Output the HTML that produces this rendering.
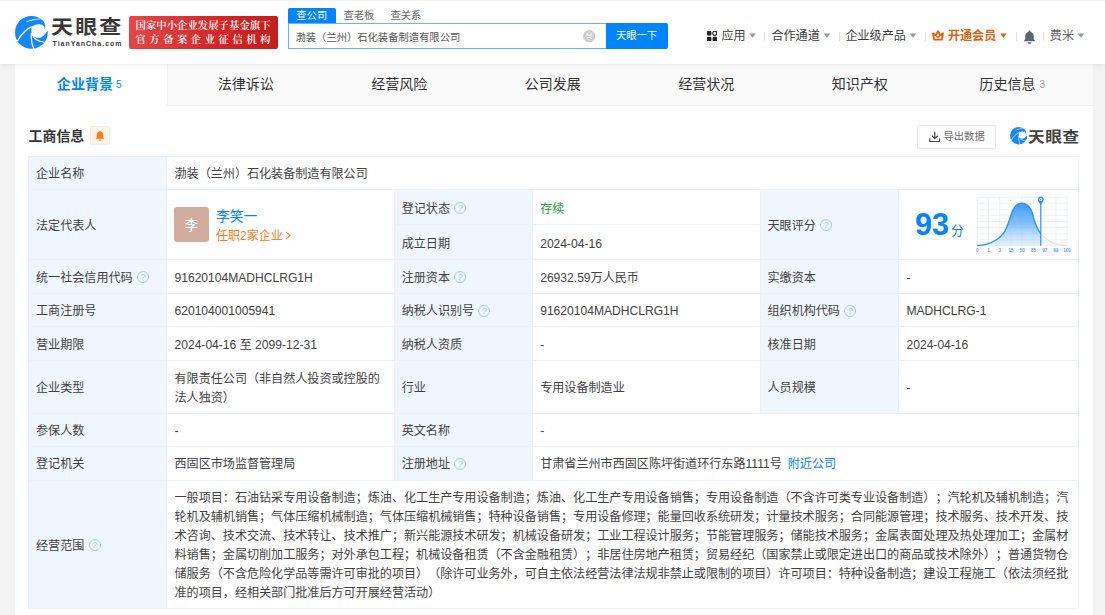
<!DOCTYPE html>
<html lang="zh-CN">
<head>
<meta charset="utf-8">
<title>天眼查</title>
<style>
*{box-sizing:border-box;margin:0;padding:0}
html,body{width:1105px;height:615px;overflow:hidden}
body{position:relative;text-spacing-trim:space-all;background:#f3f3f3;font-family:"Liberation Sans","Noto Sans CJK SC",sans-serif;font-size:12px;color:#333}
.abs{position:absolute;white-space:nowrap}
#header{position:absolute;left:0;top:0;width:1105px;height:64px;background:#fff;border-top:1px solid #f1f1f1;box-shadow:0 1px 5px rgba(0,0,0,.09);z-index:5}
#card{position:absolute;left:15px;top:64px;width:1077.6px;height:551px;background:#fff}
#nav{position:absolute;left:0;top:0;width:1077.6px;height:41.5px;background:#fafafa;border-bottom:1px solid #f2f2f2}
.tab{position:absolute;top:0;height:41.5px;width:153.5px;text-align:center;line-height:41.5px;font-size:14.05px;color:#333;white-space:nowrap}
.tab.act{background:#fff;color:#0084ff;font-weight:bold;width:152.5px;border-right:1px solid #f3f3f3}
.tab small{font-size:10px;font-weight:normal;margin-left:3px;position:relative;top:-1px}
.tab.gray small{color:#999;margin-left:4px}
.hn{position:absolute;top:.4px;margin-left:.4px;height:64px;line-height:70px;font-size:12.1px;color:#3d3d3d;white-space:nowrap}
.sep{position:absolute;top:30.5px;width:1px;height:9.5px;background:#e2e2e2}
.caret{position:absolute;top:32.4px;width:6.6px;height:4.4px;margin-left:-.3px;background:#999;clip-path:polygon(0 0,100% 0,50% 100%)}
/* table */
#tbl{position:absolute;left:27.5px;top:155.5px;width:1051.5px;border-top:1px solid #ebf2f9;border-left:1px solid #ebf2f9}
.c{border-right:1px solid #ebf2f9;border-bottom:1px solid #ebf2f9;padding-left:7.5px;padding-top:4px;font-size:12.085px;line-height:18.95px;color:#424242;display:flex;align-items:center;white-space:nowrap}
.row{display:flex}
.c{position:relative;flex:none}
.l{background:#eff6fd}
.up1 .c{padding-top:2.2px}
.up05 .c{padding-top:3px}
.c.l:nth-child(n+3),.row .row .c.l{padding-left:6.5px}
.q{display:inline-block;position:relative;top:-1.2px;width:12px;height:12px;border:1px solid #a9cdf3;border-radius:50%;margin-left:4.3px;color:#a9cdf3;font-size:9px;line-height:10.5px;text-align:center;font-family:"Liberation Sans",sans-serif}
</style>
</head>
<body>
<div id="header">
  <!-- logo -->
  <svg class="abs" style="left:15px;top:14.5px" width="33" height="33" viewBox="0 0 33 33">
    <circle cx="16.4" cy="16.4" r="16.4" fill="#1687fb"/>
    <path d="M17.2 10.6 C19.5 8.8 22 8.2 24.2 8.3 C26.5 8.5 28.2 9.2 29 10.3 C29.6 11.3 29.8 12.3 29.7 13.4 L32.6 15.1 C31.5 16.2 30.8 17.1 30.1 18 C29.4 19 28.7 19.7 27.9 20.3 C26.9 21.1 25.9 21.6 24.9 21.8 C23.5 22.1 22.1 22 20.9 21.5 C20.1 21.2 19.5 20.8 18.9 20.4 C17.6 19.3 16.9 18.2 16.7 17 C16.2 14.8 16.4 12.4 17.2 10.6 Z" fill="#fff"/>
    <path d="M29.7 13.4 C30.7 11.4 30.5 8.8 29.2 6.2 L34 5.6 L34 15.4 L32.6 15.1 Z" fill="#fff"/>
    <path d="M11 6 C15 3.8 20 2.8 25.2 3 C20 3.5 15.5 4.5 11 6Z" fill="#fff" stroke="#fff" stroke-width=".3"/>
    <path d="M17.6 10.3 C12 12.5 6 18 2.6 25" stroke="#fff" stroke-width="1.3" fill="none"/>
    <path d="M16.5 16.8 C15.9 21 16.3 27 18.8 33" stroke="#fff" stroke-width="1.2" fill="none"/>
    <path d="M16.8 17.2 C17.5 20 19 22.3 21.5 23.8 C23.5 25 26 25.8 29.5 26.3" stroke="#fff" stroke-width="1.1" fill="none"/>
  </svg>
  <div class="abs" style="left:51px;top:8.2px;font-size:19.8px;font-weight:bold;letter-spacing:2px;color:#3a3736;line-height:34px;transform:scaleX(1.11);transform-origin:0 0;font-family:'Noto Sans CJK SC','Liberation Sans',sans-serif">天眼查</div>
  <div class="abs" style="left:52.5px;top:37.6px;font-size:7px;font-weight:bold;letter-spacing:.98px;color:#3a3736;line-height:10px;font-family:'Liberation Sans',sans-serif">TianYanCha.com</div>
  <!-- red badge -->
  <div class="abs" style="left:129px;top:15px;width:149px;height:33px;border-radius:2px;background:linear-gradient(100deg,#e54848 0%,#d42626 60%,#c41c1c 100%)"></div>
  <div class="abs" style="left:135.5px;top:16.5px;font-family:'Noto Serif CJK SC','Liberation Serif',serif;font-weight:600;font-size:10.4px;color:#fff;line-height:13px;letter-spacing:0">国家中小企业发展子基金旗下</div>
  <div class="abs" style="left:135.5px;top:31.3px;font-family:'Noto Serif CJK SC','Liberation Serif',serif;font-weight:600;font-size:10.4px;color:#fff;line-height:13px;letter-spacing:3.45px">官方备案企业征信机构</div>
  <!-- search -->
  <div class="abs" style="left:288px;top:6.5px;width:47.5px;height:15.5px;background:#0084ff;border-radius:2px 2px 0 0;color:#fff;font-size:10.3px;line-height:15.5px;text-align:center">查公司</div>
  <div class="abs" style="left:343.5px;top:6.5px;color:#666;font-size:10.3px;line-height:15.5px">查老板</div>
  <div class="abs" style="left:390.5px;top:6.5px;color:#666;font-size:10.3px;line-height:15.5px">查关系</div>
  <div class="abs" style="left:288px;top:22px;width:318px;height:25.75px;border:1px solid #66b0ff;border-right:none;background:#fff;border-radius:1px 0 0 1px"></div>
  <div class="abs" style="left:295.5px;top:23.5px;height:26px;line-height:26px;font-size:10.3px;color:#555">渤装（兰州）石化装备制造有限公司</div>
  <svg class="abs" style="left:583px;top:28.5px" width="12.4" height="12.4" viewBox="0 0 12 12"><circle cx="6" cy="6" r="6" fill="#cfcfcf"/><path d="M3.9 3.9 L8.1 8.1 M8.1 3.9 L3.9 8.1" stroke="#fff" stroke-width="1.2" stroke-linecap="round"/></svg>
  <div class="abs" style="left:605.5px;top:22px;width:62px;height:25.75px;background:#0084ff;border-radius:0 2px 2px 0;color:#fff;font-size:10.3px;line-height:26.5px;text-align:center">天眼一下</div>
  <!-- right nav -->
  <svg class="abs" style="left:707px;top:29.5px" width="10" height="10.4" viewBox="0 0 10.5 10.5" preserveAspectRatio="none"><rect x="0" y="0" width="4.6" height="4.6" rx=".8" fill="#222"/><circle cx="8.1" cy="2.3" r="2.1" fill="none" stroke="#222" stroke-width="1.1"/><rect x="0" y="5.9" width="4.6" height="4.6" rx=".8" fill="#222"/><rect x="5.9" y="5.9" width="4.6" height="4.6" rx=".8" fill="#222"/></svg>
  <div class="hn" style="left:721px">应用</div><i class="caret" style="left:749.5px"></i>
  <i class="sep" style="left:764px"></i>
  <div class="hn" style="left:771px">合作通道</div><i class="caret" style="left:824px"></i>
  <i class="sep" style="left:839px"></i>
  <div class="hn" style="left:845px">企业级产品</div><i class="caret" style="left:910px"></i>
  <i class="sep" style="left:925px"></i>
  <svg class="abs" style="left:932.3px;top:29.3px" width="12" height="10.6" viewBox="0 0 12 10.6"><path d="M1 3.4 L3.7 5.3 L6 1.2 L8.3 5.3 L11 3.4 L9.9 9.6 L2.1 9.6 Z" fill="none" stroke="#e0620d" stroke-width="1.9" stroke-linejoin="round"/><path d="M4.3 6 L6 7.6 L7.7 6" fill="none" stroke="#e0620d" stroke-width="1.3"/></svg>
  <div class="hn" style="left:947.5px;color:#e0620d;font-weight:bold">开通会员</div><i class="caret" style="left:1000.5px;background:#e0620d"></i>
  <i class="sep" style="left:1015.5px"></i>
  <svg class="abs" style="left:1022.5px;top:29px" width="13" height="14.5" viewBox="0 0 13 14.5"><path d="M6.5 0.6 C7.2 0.6 7.5 1.1 7.5 1.7 C9.7 2.3 10.8 4.2 10.8 6.4 L10.8 9.2 L12.4 11.2 L0.6 11.2 L2.2 9.2 L2.2 6.4 C2.2 4.2 3.3 2.3 5.5 1.7 C5.5 1.1 5.8 0.6 6.5 0.6 Z" fill="#5b6570"/><path d="M4.7 12.3 L8.3 12.3 C8.3 13.3 7.4 13.9 6.5 13.9 C5.6 13.9 4.7 13.3 4.7 12.3Z" fill="#5b6570"/></svg>
  <i class="sep" style="left:1043px"></i>
  <div class="hn" style="left:1049.4px;color:#666">费米</div><i class="caret" style="left:1078px"></i>
</div>

<div id="card">
  <div id="nav">
    <div class="tab act" style="left:0"><span style="position:relative;left:-1.5px">企业背景<small>5</small></span></div>
    <div class="tab" style="left:154px">法律诉讼</div>
    <div class="tab" style="left:307.5px">经营风险</div>
    <div class="tab" style="left:461px">公司发展</div>
    <div class="tab" style="left:614.5px">经营状况</div>
    <div class="tab" style="left:768px">知识产权</div>
    <div class="tab gray" style="left:921.5px"><span style="position:relative;left:-1px">历史信息<small>3</small></span></div>
  </div>
</div>

<!-- section head -->
<div class="abs" style="left:28.6px;top:126.7px;font-size:13.9px;font-weight:bold;color:#333;line-height:19px">工商信息</div>
<div class="abs" style="left:90.3px;top:126px;width:19.7px;height:18.8px;background:#fff4ea;border:1px solid #ffeadb;border-radius:2px"></div>
<svg class="abs" style="left:95px;top:129.8px" width="10" height="11.5" viewBox="0 0 13 14.5"><path d="M6.5 0.6 C7.2 0.6 7.5 1.1 7.5 1.7 C9.7 2.3 10.8 4.2 10.8 6.4 L10.8 9.2 L12.4 11.2 L0.6 11.2 L2.2 9.2 L2.2 6.4 C2.2 4.2 3.3 2.3 5.5 1.7 C5.5 1.1 5.8 0.6 6.5 0.6 Z" fill="#ff7d18"/><path d="M4.9 12.2 L8.1 12.2 C8.1 13.4 7.4 14 6.5 14 C5.6 14 4.9 13.4 4.9 12.2Z" fill="#ff7d18"/></svg>
<!-- export button -->
<div class="abs" style="left:917px;top:125px;width:78.5px;height:23.5px;border:1px solid #e6e6e6;border-radius:2px;background:#fff"></div>
<svg class="abs" style="left:928.5px;top:130.5px" width="11.5" height="11.5" viewBox="0 0 11.5 11.5"><path d="M5.75 0.8 L5.75 7.4 M2.9 4.8 L5.75 7.6 L8.6 4.8 M0.8 7.2 L0.8 10.6 L10.7 10.6 L10.7 7.2" fill="none" stroke="#444" stroke-width="1.2" stroke-linejoin="round"/></svg>
<div class="abs" style="left:943.5px;top:125px;line-height:24px;font-size:10.3px;color:#707070">导出数据</div>
<!-- small logo -->
<svg class="abs" style="left:1009.5px;top:127px" width="17.5" height="17.5" viewBox="0 0 33 33">
    <circle cx="16.4" cy="16.4" r="16.4" fill="#1687fb"/>
    <path d="M17.2 10.6 C19.5 8.8 22 8.2 24.2 8.3 C26.5 8.5 28.2 9.2 29 10.3 C29.6 11.3 29.8 12.3 29.7 13.4 L32.6 15.1 C31.5 16.2 30.8 17.1 30.1 18 C29.4 19 28.7 19.7 27.9 20.3 C26.9 21.1 25.9 21.6 24.9 21.8 C23.5 22.1 22.1 22 20.9 21.5 C20.1 21.2 19.5 20.8 18.9 20.4 C17.6 19.3 16.9 18.2 16.7 17 C16.2 14.8 16.4 12.4 17.2 10.6 Z" fill="#fff"/>
    <path d="M29.7 13.4 C30.7 11.4 30.5 8.8 29.2 6.2 L34 5.6 L34 15.4 L32.6 15.1 Z" fill="#fff"/>
    <path d="M11 6 C15 3.8 20 2.8 25.2 3 C20 3.5 15.5 4.5 11 6Z" fill="#fff" stroke="#fff" stroke-width=".3"/>
    <path d="M17.6 10.3 C12 12.5 6 18 2.6 25" stroke="#fff" stroke-width="1.3" fill="none"/>
    <path d="M16.5 16.8 C15.9 21 16.3 27 18.8 33" stroke="#fff" stroke-width="1.2" fill="none"/>
    <path d="M16.8 17.2 C17.5 20 19 22.3 21.5 23.8 C23.5 25 26 25.8 29.5 26.3" stroke="#fff" stroke-width="1.1" fill="none"/>
  </svg>
<div class="abs" style="left:1028.3px;top:123.9px;font-size:14.4px;font-weight:bold;letter-spacing:.5px;color:#414141;line-height:23px;transform:scaleX(1.155);transform-origin:0 0;font-family:'Noto Sans CJK SC','Liberation Sans',sans-serif">天眼查</div>

<div id="tbl">
<div class="row" style="height:33.5px"><div class="c l" style="width:138.5px;">企业名称</div><div class="c " style="width:912px;">渤装（兰州）石化装备制造有限公司</div></div>
<div class="row" style="height:70px;position:relative">
<div class="c l" style="width:138.5px">法定代表人</div>
<div class="c" style="width:228.2px;position:relative">
  <div class="abs" style="left:7px;top:17px;width:34.5px;height:35px;border-radius:3px;background:#d1ad9e;color:#fff;font-size:13.5px;text-align:center;line-height:37px">李</div>
  <div class="abs" style="left:49px;top:16.5px;font-size:13.75px;color:#0084ff;line-height:19px">李笑一</div>
  <div class="abs" style="left:49px;top:37.6px;font-size:12.03px;color:#ff7d18;line-height:17px">任职2家企业<svg width="6" height="9" viewBox="0 0 6 9" style="margin-left:2.3px;vertical-align:-.2px"><path d="M1 .8 L5 4.5 L1 8.2" fill="none" stroke="#ff8a30" stroke-width="1.1"/></svg></div>
</div>
<div style="flex:none;width:365.8px">
  <div class="row" style="height:35px"><div class="c l" style="width:137.5px">登记状态<i class="q">?</i></div><div class="c" style="width:228.3px;color:#1e9e3e">存续</div></div>
  <div class="row" style="height:35px"><div class="c l" style="width:137.5px">成立日期</div><div class="c" style="width:228.3px">2024-04-16</div></div>
</div>
<div class="c l" style="width:138px">天眼评分<i class="q">?</i></div>
<div class="c" style="width:180px;position:relative" id="score"><div class="abs" style="left:16px;top:16.5px;font-family:'Liberation Sans',sans-serif;font-weight:bold;font-size:30.6px;line-height:34px;color:#0084ff">93</div>
<div class="abs" style="left:52px;top:31.8px;font-size:12.8px;line-height:17px;color:#0084ff">分</div>
<svg class="abs" style="left:76px;top:5.0px" width="97" height="62" viewBox="0 0 97 62">
<defs><linearGradient id="bg" x1="0" y1="0" x2="0" y2="1"><stop offset="0" stop-color="#3b9aff" stop-opacity="1"/><stop offset=".5" stop-color="#62adff" stop-opacity=".75"/><stop offset="1" stop-color="#a8d3ff" stop-opacity=".3"/></linearGradient><clipPath id="cl"><rect x="0" y="0" width="65.8" height="62"/></clipPath><clipPath id="cr"><rect x="65.8" y="0" width="40" height="62"/></clipPath></defs>
<g stroke="#e4eefa" stroke-width=".7" fill="none"><path d="M2.20 2.2V50.8"/><path d="M13.44 2.2V50.8"/><path d="M24.68 2.2V50.8"/><path d="M35.92 2.2V50.8"/><path d="M47.16 2.2V50.8"/><path d="M58.40 2.2V50.8"/><path d="M69.64 2.2V50.8"/><path d="M80.88 2.2V50.8"/><path d="M92.12 2.2V50.8"/><path d="M2.2 2.19H92.1"/><path d="M2.2 8.27H92.1"/><path d="M2.2 14.34H92.1"/><path d="M2.2 20.42H92.1"/><path d="M2.2 26.49H92.1"/><path d="M2.2 32.57H92.1"/><path d="M2.2 38.65H92.1"/><path d="M2.2 44.72H92.1"/><path d="M2.2 50.80H92.1"/></g>
<path d="M2.20 50.60 C3.77 50.36 8.38 50.15 11.60 49.17 C14.82 48.20 18.73 46.50 21.50 44.75 C24.27 43.00 26.53 40.70 28.20 38.67 C29.87 36.65 30.55 34.63 31.50 32.60 C32.45 30.57 33.17 28.53 33.90 26.50 C34.63 24.47 35.17 22.45 35.90 20.43 C36.63 18.41 37.23 16.17 38.30 14.35 C39.37 12.53 40.85 10.55 42.30 9.50 C43.75 8.45 45.43 8.05 47.00 8.05 C48.57 8.05 50.23 8.45 51.70 9.50 C53.17 10.55 54.77 12.53 55.80 14.35 C56.83 16.17 57.23 18.41 57.90 20.43 C58.57 22.45 59.08 24.47 59.80 26.50 C60.52 28.53 61.20 30.57 62.20 32.60 C63.20 34.63 64.10 36.65 65.80 38.67 C67.50 40.70 69.83 43.00 72.40 44.75 C74.97 46.50 77.88 48.20 81.20 49.17 C84.52 50.15 90.45 50.36 92.30 50.60 L92.3 50.8 L2.2 50.8 Z" fill="url(#bg)" clip-path="url(#cl)"/>
<path d="M2.20 50.60 C3.77 50.36 8.38 50.15 11.60 49.17 C14.82 48.20 18.73 46.50 21.50 44.75 C24.27 43.00 26.53 40.70 28.20 38.67 C29.87 36.65 30.55 34.63 31.50 32.60 C32.45 30.57 33.17 28.53 33.90 26.50 C34.63 24.47 35.17 22.45 35.90 20.43 C36.63 18.41 37.23 16.17 38.30 14.35 C39.37 12.53 40.85 10.55 42.30 9.50 C43.75 8.45 45.43 8.05 47.00 8.05 C48.57 8.05 50.23 8.45 51.70 9.50 C53.17 10.55 54.77 12.53 55.80 14.35 C56.83 16.17 57.23 18.41 57.90 20.43 C58.57 22.45 59.08 24.47 59.80 26.50 C60.52 28.53 61.20 30.57 62.20 32.60 C63.20 34.63 64.10 36.65 65.80 38.67 C67.50 40.70 69.83 43.00 72.40 44.75 C74.97 46.50 77.88 48.20 81.20 49.17 C84.52 50.15 90.45 50.36 92.30 50.60 L92.3 50.8 L2.2 50.8 Z" fill="#eef1f4" fill-opacity=".6" clip-path="url(#cr)"/>
<path d="M2.20 50.60 C3.77 50.36 8.38 50.15 11.60 49.17 C14.82 48.20 18.73 46.50 21.50 44.75 C24.27 43.00 26.53 40.70 28.20 38.67 C29.87 36.65 30.55 34.63 31.50 32.60 C32.45 30.57 33.17 28.53 33.90 26.50 C34.63 24.47 35.17 22.45 35.90 20.43 C36.63 18.41 37.23 16.17 38.30 14.35 C39.37 12.53 40.85 10.55 42.30 9.50 C43.75 8.45 45.43 8.05 47.00 8.05 C48.57 8.05 50.23 8.45 51.70 9.50 C53.17 10.55 54.77 12.53 55.80 14.35 C56.83 16.17 57.23 18.41 57.90 20.43 C58.57 22.45 59.08 24.47 59.80 26.50 C60.52 28.53 61.20 30.57 62.20 32.60 C63.20 34.63 64.10 36.65 65.80 38.67 C67.50 40.70 69.83 43.00 72.40 44.75 C74.97 46.50 77.88 48.20 81.20 49.17 C84.52 50.15 90.45 50.36 92.30 50.60" fill="none" stroke="#2a8ffb" stroke-width="1.3" clip-path="url(#cl)"/>
<path d="M2.20 50.60 C3.77 50.36 8.38 50.15 11.60 49.17 C14.82 48.20 18.73 46.50 21.50 44.75 C24.27 43.00 26.53 40.70 28.20 38.67 C29.87 36.65 30.55 34.63 31.50 32.60 C32.45 30.57 33.17 28.53 33.90 26.50 C34.63 24.47 35.17 22.45 35.90 20.43 C36.63 18.41 37.23 16.17 38.30 14.35 C39.37 12.53 40.85 10.55 42.30 9.50 C43.75 8.45 45.43 8.05 47.00 8.05 C48.57 8.05 50.23 8.45 51.70 9.50 C53.17 10.55 54.77 12.53 55.80 14.35 C56.83 16.17 57.23 18.41 57.90 20.43 C58.57 22.45 59.08 24.47 59.80 26.50 C60.52 28.53 61.20 30.57 62.20 32.60 C63.20 34.63 64.10 36.65 65.80 38.67 C67.50 40.70 69.83 43.00 72.40 44.75 C74.97 46.50 77.88 48.20 81.20 49.17 C84.52 50.15 90.45 50.36 92.30 50.60" fill="none" stroke="#d5dbe1" stroke-width=".9" clip-path="url(#cr)"/>
<path d="M65.8 8V50.8" stroke="#1a84f5" stroke-width="1.1"/>
<path d="M65.8 10 C64.6 8 62.9 6.6 62.9 4.5 A2.9 2.9 0 1 1 68.7 4.5 C68.7 6.6 67.0 8 65.8 10Z" fill="#2a8ffb"/><circle cx="65.8" cy="4.5" r="1.5" fill="#fff"/><circle cx="65.8" cy="4.5" r=".75" fill="#2a8ffb"/>
<g font-family="Liberation Sans, sans-serif" font-size="4.5" font-weight="bold" fill="#4aa2ff" text-anchor="middle"><text x="2.20" y="57.1">0</text><text x="13.44" y="57.1">1</text><text x="24.68" y="57.1">3</text><text x="35.92" y="57.1">15</text><text x="47.16" y="57.1">50</text><text x="58.40" y="57.1">85</text><text x="69.64" y="57.1">97</text><text x="80.88" y="57.1">99</text><text x="92.12" y="57.1">100</text></g>
</svg></div>
</div>
<div class="row" style="height:33.5px"><div class="c l" style="width:138.5px;">统一社会信用代码<i class="q">?</i></div><div class="c " style="width:228.2px;">91620104MADHCLRG1H</div><div class="c l" style="width:137.5px;">注册资本<i class="q">?</i></div><div class="c " style="width:228.3px;">26932.59万人民币</div><div class="c l" style="width:138px;">实缴资本</div><div class="c " style="width:180px;">-</div></div>
<div class="row" style="height:33.6px"><div class="c l" style="width:138.5px;">工商注册号</div><div class="c " style="width:228.2px;">620104001005941</div><div class="c l" style="width:137.5px;">纳税人识别号<i class="q">?</i></div><div class="c " style="width:228.3px;">91620104MADHCLRG1H</div><div class="c l" style="width:138px;">组织机构代码<i class="q">?</i></div><div class="c " style="width:180px;">MADHCLRG-1</div></div>
<div class="row" style="height:33.5px"><div class="c l" style="width:138.5px;">营业期限</div><div class="c " style="width:228.2px;">2024-04-16 至 2099-12-31</div><div class="c l" style="width:137.5px;">纳税人资质</div><div class="c " style="width:228.3px;">-</div><div class="c l" style="width:138px;">核准日期</div><div class="c " style="width:180px;">2024-04-16</div></div>
<div class="row" style="height:53.4px"><div class="c l" style="width:138.5px;">企业类型</div><div class="c " style="width:228.2px;"><span style="line-height:18.9px">有限责任公司（非自然人投资或控股的<br>法人独资）</span></div><div class="c l" style="width:137.5px;">行业</div><div class="c " style="width:228.3px;">专用设备制造业</div><div class="c l" style="width:138px;">人员规模</div><div class="c " style="width:180px;">-</div></div>
<div class="row up1" style="height:33.5px"><div class="c l" style="width:138.5px;">参保人数</div><div class="c " style="width:228.2px;">-</div><div class="c l" style="width:137.5px;">英文名称</div><div class="c " style="width:546.3px;">-</div></div>
<div class="row up1" style="height:33.3px"><div class="c l" style="width:138.5px;">登记机关</div><div class="c " style="width:228.2px;">西固区市场监督管理局</div><div class="c l" style="width:137.5px;">注册地址<i class="q">?</i></div><div class="c " style="width:546.3px;">甘肃省兰州市西固区陈坪街道环行东路1111号<span style="color:#0084ff;margin-left:6px">附近公司</span></div></div>
<div class="row up05" style="height:128.5px"><div class="c l" style="width:138.5px;">经营范围<i class="q">?</i></div><div class="c " style="width:912px;"><span style="line-height:18.95px">一般项目：石油钻采专用设备制造；炼油、化工生产专用设备制造；炼油、化工生产专用设备销售；专用设备制造（不含许可类专业设备制造）；汽轮机及辅机制造；汽<br>轮机及辅机销售；气体压缩机械制造；气体压缩机械销售；特种设备销售；专用设备修理；能量回收系统研发；计量技术服务；合同能源管理；技术服务、技术开发、技<br>术咨询、技术交流、技术转让、技术推广；新兴能源技术研发；机械设备研发；工业工程设计服务；节能管理服务；储能技术服务；金属表面处理及热处理加工；金属材<br>料销售；金属切削加工服务；对外承包工程；机械设备租赁（不含金融租赁）；非居住房地产租赁；贸易经纪（国家禁止或限定进出口的商品或技术除外）；普通货物仓<br>储服务（不含危险化学品等需许可审批的项目）（除许可业务外，可自主依法经营法律法规非禁止或限制的项目）许可项目：特种设备制造；建设工程施工（依法须经批<br>准的项目，经相关部门批准后方可开展经营活动）</span></div></div>
</div>
</body>
</html>
